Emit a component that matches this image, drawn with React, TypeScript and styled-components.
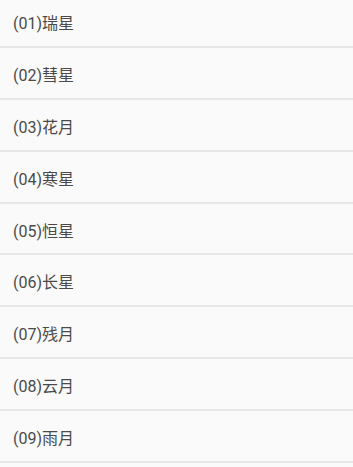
import * as React from "react";
import styled, { createGlobalStyle } from "styled-components";

const items = ["瑞星", "彗星", "花月", "寒星", "恒星", "长星", "残月", "云月", "雨月"];

export default function App() {
  return (
    <>
      <GlobalStyle />
      <Screen>
        <List>
          {items.map((name, i) => (
            <Row key={name}>
              ({String(i + 1).padStart(2, "0")}){name}
            </Row>
          ))}
        </List>
      </Screen>
    </>
  );
}

const GlobalStyle = createGlobalStyle`
  html, body {
    margin: 0;
    padding: 0;
    background: #fafafa;
  }
`;

const Screen = styled.main`
  width: 353px;
  height: 467px;
  overflow: hidden;
  background: #fafafa;
  font-family: Roboto, "Noto Sans CJK SC", sans-serif;
`;

const List = styled.ul`
  list-style: none;
  margin: -4px 0 0;
  padding: 0;
`;

const Row = styled.li`
  box-sizing: border-box;
  height: 51.9px;
  display: flex;
  align-items: center;
  padding: 2px 0 0 13px;
  font-size: 16px;
  color: #4a4a4a;
  border-bottom: 2px solid #e8e8e8;
`;
